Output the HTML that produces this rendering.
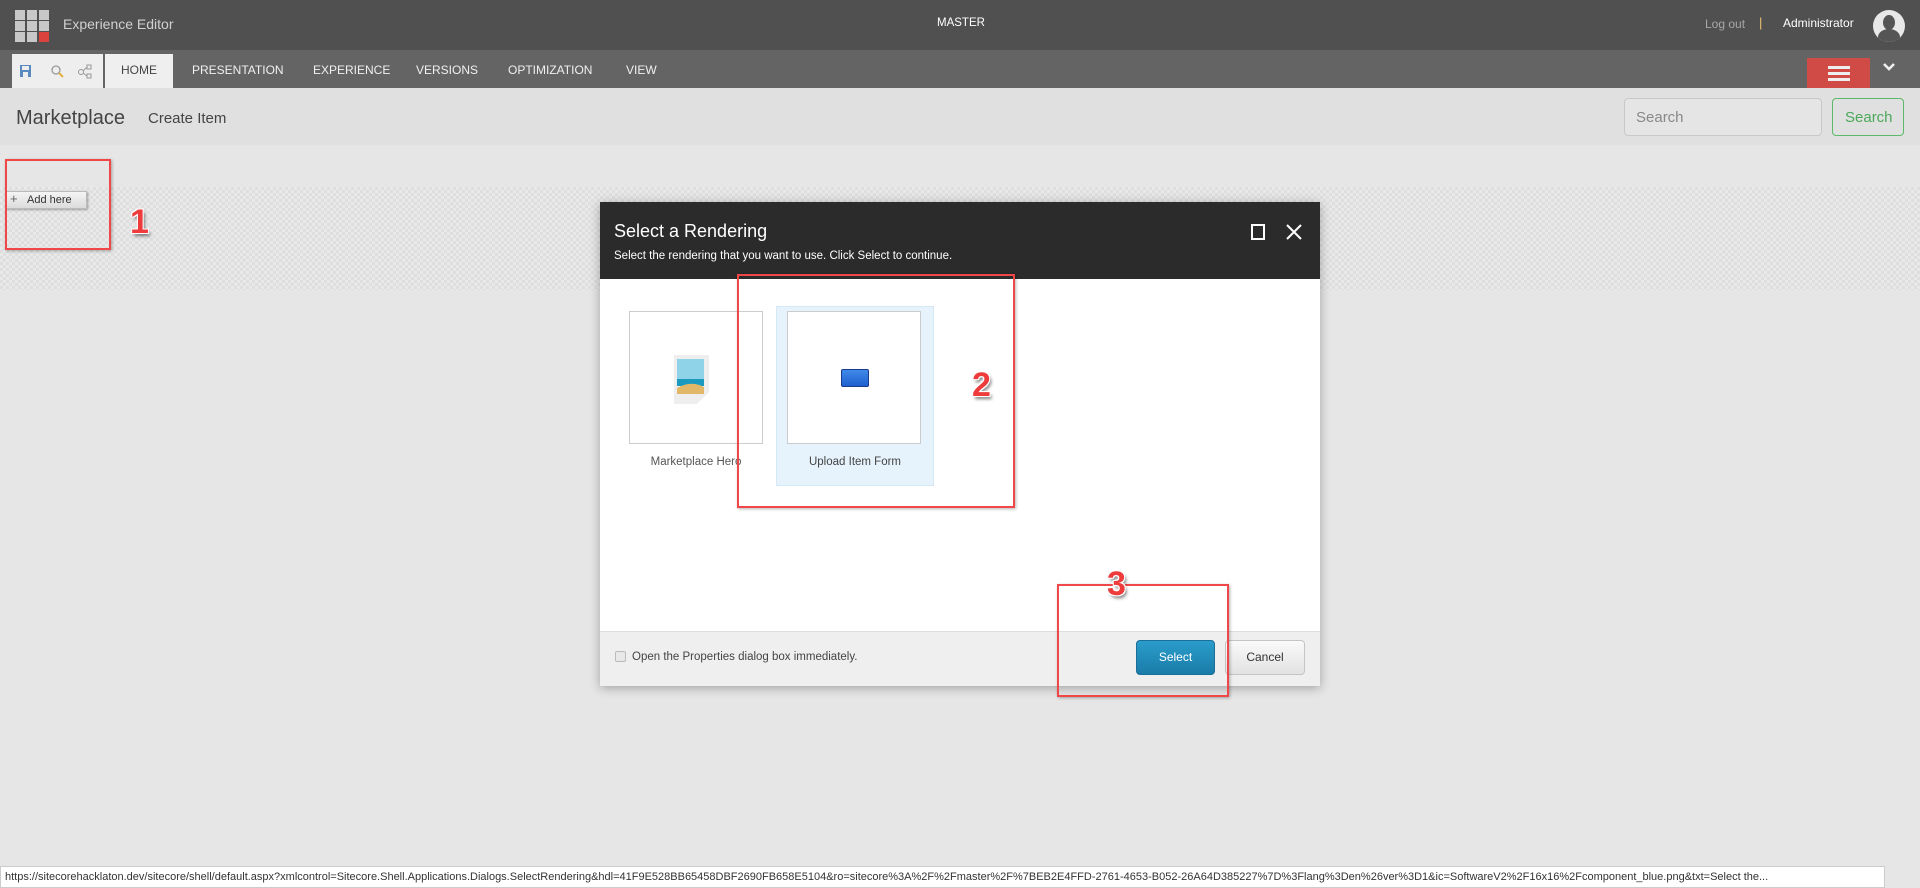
<!DOCTYPE html>
<html><head><meta charset="utf-8"><style>
*{box-sizing:border-box;margin:0;padding:0}
body{width:1920px;height:888px;overflow:hidden;background:#e6e6e6;font-family:"Liberation Sans",sans-serif;position:relative}
.a{position:absolute}
.top{left:0;top:0;width:1920px;height:50px;background:#505050}
.rib{left:0;top:50px;width:1920px;height:38px;background:#646464}
.tab{top:50px;height:38px;line-height:40px;color:#f0f0f0;font-size:12px}
.hdr{left:0;top:88px;width:1920px;height:57px;background:#e0e0e0}
.rb{border:2px solid #f04848;box-shadow:1px 1px 3px rgba(0,0,0,.3)}
.num{color:#ee3b3b;font-weight:bold;font-size:34px;text-shadow:1px 1px 0 #fff,-1px -1px 0 #fff,1px -1px 0 #fff,-1px 1px 0 #fff,2px 3px 3px rgba(0,0,0,.5)}
.chk{left:0;top:187px;width:1920px;height:103px;background-color:#e9e9e9;background-image:linear-gradient(45deg,#dedede 25%,transparent 25%,transparent 75%,#dedede 75%),linear-gradient(45deg,#dedede 25%,transparent 25%,transparent 75%,#dedede 75%);background-size:6px 6px;background-position:0 0,3px 3px}
</style></head><body>
<div class="a top"></div>
<svg class="a" style="left:15px;top:10px" width="34" height="32">
<g fill="#c8c8c8"><rect x="0" y="0" width="10" height="10"/><rect x="12" y="0" width="10" height="10"/><rect x="24" y="0" width="10" height="10"/><rect x="0" y="11" width="10" height="10"/><rect x="12" y="11" width="10" height="10"/><rect x="24" y="11" width="10" height="10"/><rect x="0" y="22" width="10" height="10"/><rect x="12" y="22" width="10" height="10"/></g><rect x="24" y="22" width="10" height="10" fill="#d9423d"/></svg>
<div class="a" style="left:63px;top:16px;color:#d0d0d0;font-size:14px">Experience Editor</div>
<div class="a" style="left:937px;top:17px;color:#fff;font-size:11.5px">MASTER</div>
<div class="a" style="left:1705px;top:17px;color:#a8a8a8;font-size:12px">Log out</div>
<div class="a" style="left:1759px;top:15px;color:#e8c070;font-size:13px">|</div>
<div class="a" style="left:1783px;top:16px;color:#fff;font-size:12px">Administrator</div>
<div class="a" style="left:1873px;top:10px;width:32px;height:32px;border-radius:50%;background:#e8e8e8;overflow:hidden"><div class="a" style="left:10px;top:5px;width:12px;height:15px;border-radius:50%;background:#555"></div><div class="a" style="left:5px;top:19px;width:22px;height:16px;border-radius:50% 50% 0 0;background:#555"></div></div>
<div class="a rib"></div>
<div class="a" style="left:12px;top:54px;width:91px;height:34px;background:#eeeeee"></div>
<svg class="a" style="left:19px;top:63px" width="80" height="16"><rect x="1" y="2" width="11" height="12" fill="#5a8ac0"/><rect x="3" y="3" width="7" height="4" fill="#eee"/><rect x="4" y="9" width="5" height="5" fill="#eee"/><circle cx="37" cy="7" r="4" fill="none" stroke="#999" stroke-width="1.3"/><line x1="40" y1="10" x2="44" y2="14" stroke="#e0b040" stroke-width="2"/><g fill="none" stroke="#999"><circle cx="62" cy="9" r="2.5"/><rect x="68" y="2" width="4" height="4"/><rect x="68" y="11" width="4" height="4"/><path d="M64 8 L68 4 M64 10 L68 13"/></g></svg>
<div class="a" style="left:105px;top:54px;width:68px;height:34px;background:#efefef"></div>
<div class="a tab" style="left:121px;color:#444">HOME</div>
<div class="a tab" style="left:192px">PRESENTATION</div>
<div class="a tab" style="left:313px">EXPERIENCE</div>
<div class="a tab" style="left:416px">VERSIONS</div>
<div class="a tab" style="left:508px">OPTIMIZATION</div>
<div class="a tab" style="left:626px">VIEW</div>
<div class="a" style="left:1807px;top:58px;width:63px;height:30px;background:#d04b45"></div>
<div class="a" style="left:1828px;top:66px;width:22px;height:3px;background:#eee;box-shadow:0 6px 0 #eee,0 12px 0 #eee"></div>
<svg class="a" style="left:1882px;top:62px" width="14" height="10"><path d="M2 2 L7 7 L12 2" fill="none" stroke="#eee" stroke-width="2.6"/></svg>
<div class="a hdr"></div>
<div class="a" style="left:16px;top:107px;color:#444;font-size:20px">Marketplace</div>
<div class="a" style="left:148px;top:110px;color:#444;font-size:15px">Create Item</div>
<div class="a" style="left:1624px;top:98px;width:198px;height:38px;border:1px solid #c8c8c8;border-radius:4px;background:#e5e5e5;color:#888;font-size:15px;padding:10px 11px">Search</div>
<div class="a" style="left:1832px;top:98px;width:72px;height:38px;border:1px solid #5cb86a;border-radius:4px;color:#4ca85a;font-size:15px;padding:10px 0 0 12px">Search</div>
<div class="a chk"></div>
<div class="a" style="left:6px;top:191px;width:81px;height:18px;background:linear-gradient(#f4f4f4,#dcdcdc);border:1px solid #bbb;box-shadow:1px 1px 2px rgba(0,0,0,.3);font-size:11px;color:#333;padding:2px 0 0 20px">Add here</div>
<div class="a" style="left:10px;top:191px;font-size:13px;color:#666">+</div>
<div class="a rb" style="left:5px;top:159px;width:106px;height:91px"></div>
<div class="a num" style="left:130px;top:203px">1</div>
<div class="a" style="left:600px;top:202px;width:720px;height:484px;background:#fff;box-shadow:0 2px 10px rgba(0,0,0,.3)"></div>
<div class="a" style="left:600px;top:202px;width:720px;height:77px;background:#2b2b2b"></div>
<div class="a" style="left:614px;top:221px;color:#fff;font-size:18px">Select a Rendering</div>
<div class="a" style="left:614px;top:250px;color:#fff;font-size:11.5px">Select the rendering that you want to use. Click Select to continue.</div>
<div class="a" style="left:1251px;top:224px;width:14px;height:16px;border:2px solid #fff"></div>
<svg class="a" style="left:1285px;top:223px" width="18" height="18"><path d="M2 2 L16 16 M16 2 L2 16" stroke="#fff" stroke-width="2"/></svg>
<div class="a" style="left:629px;top:311px;width:134px;height:133px;border:1px solid #ccc"></div>
<svg class="a" style="left:673px;top:354px" width="36" height="50"><path d="M1 1 H36 V38 L24 50 H1 Z" fill="#eee"/><rect x="4" y="5" width="27" height="20" fill="#8fd3e8"/><rect x="4" y="25" width="27" height="7" fill="#1b9ac0"/><path d="M4 40 V34 Q18 26 31 33 V40 Z" fill="#e2b868"/></svg>
<div class="a" style="left:629px;top:456px;width:134px;text-align:center;color:#555;font-size:11.5px">Marketplace Hero</div>
<div class="a" style="left:776px;top:306px;width:158px;height:180px;background:#e6f3fc;border:1px solid #d4e8f6"></div>
<div class="a" style="left:787px;top:311px;width:134px;height:133px;border:1px solid #ccc;background:#fff"></div>
<div class="a" style="left:841px;top:369px;width:28px;height:18px;border:1px solid #1a3a8a;border-radius:2px;background:linear-gradient(#3f8ae8,#1d5fcf)"></div>
<div class="a" style="left:776px;top:456px;width:158px;text-align:center;color:#444;font-size:11.5px">Upload Item Form</div>
<div class="a rb" style="left:737px;top:274px;width:278px;height:234px"></div>
<div class="a num" style="left:972px;top:366px">2</div>
<div class="a" style="left:600px;top:631px;width:720px;height:55px;background:#efefef;border-top:1px solid #ddd"></div>
<div class="a" style="left:615px;top:651px;width:11px;height:11px;border:1px solid #bbb;background:#e8e8e8;border-radius:2px"></div>
<div class="a" style="left:632px;top:651px;color:#444;font-size:11.5px">Open the Properties dialog box immediately.</div>
<div class="a" style="left:1136px;top:640px;width:79px;height:35px;border-radius:4px;background:linear-gradient(#2a9ccc,#1a7ca8);border:1px solid #1a6f98;color:#fff;font-size:12px;text-align:center;line-height:33px">Select</div>
<div class="a" style="left:1225px;top:640px;width:80px;height:35px;border-radius:4px;background:linear-gradient(#fafafa,#e2e2e2);border:1px solid #c4c4c4;color:#333;font-size:12px;text-align:center;line-height:33px">Cancel</div>
<div class="a rb" style="left:1057px;top:584px;width:172px;height:113px"></div>
<div class="a num" style="left:1107px;top:565px">3</div>
<div class="a" style="left:0;top:866px;width:1885px;height:22px;background:#fff;border:1px solid #ccc;font-size:11px;color:#333;padding:4px 0 0 4px;white-space:nowrap;overflow:hidden">https://sitecorehacklaton.dev/sitecore/shell/default.aspx?xmlcontrol=Sitecore.Shell.Applications.Dialogs.SelectRendering&amp;hdl=41F9E528BB65458DBF2690FB658E5104&amp;ro=sitecore%3A%2F%2Fmaster%2F%7BEB2E4FFD-2761-4653-B052-26A64D385227%7D%3Flang%3Den%26ver%3D1&amp;ic=SoftwareV2%2F16x16%2Fcomponent_blue.png&amp;txt=Select the...</div>
</body></html>
